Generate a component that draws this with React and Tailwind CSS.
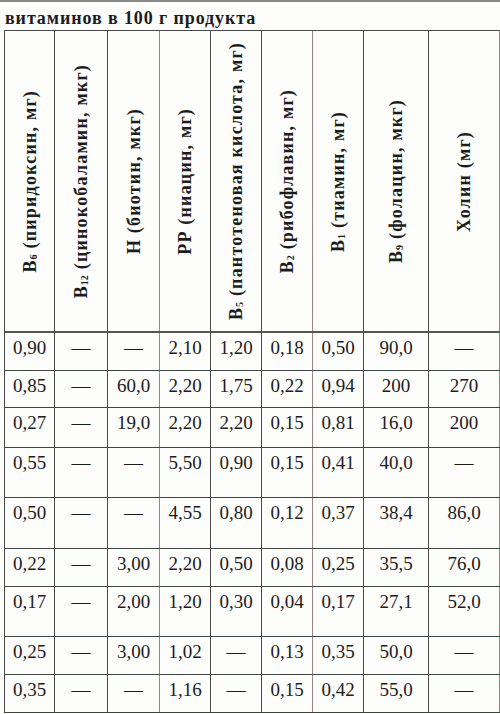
const columns = [
  { w: "w-[50px]", tint: false, label: ["B", "6", "(пиридоксин, мг)"] },
  { w: "w-[53px]", tint: false, label: ["B", "12", "(цинокобаламин, мкг)"] },
  { w: "w-[52px]", tint: true, label: ["H", null, "(биотин, мкг)"] },
  { w: "w-[51px]", tint: false, label: ["PP", null, "(ниацин, мг)"] },
  { w: "w-[51px]", tint: false, label: ["B", "5", "(пантотеновая кислота, мг)"] },
  { w: "w-[51px]", tint: true, label: ["B", "2", "(рибофлавин, мг)"] },
  { w: "w-[51px]", tint: false, label: ["B", "1", "(тиамин, мг)"] },
  { w: "w-[65px]", tint: false, label: ["B", "9", "(фолацин, мкг)"] },
  { w: "w-[71px]", tint: true, label: ["Холин", null, "(мг)"] },
];

const rows = [
  { h: "h-[38px]", cells: ["0,90", "—", "—", "2,10", "1,20", "0,18", "0,50", "90,0", "—"] },
  { h: "h-[37px]", cells: ["0,85", "—", "60,0", "2,20", "1,75", "0,22", "0,94", "200", "270"] },
  { h: "h-[40px]", cells: ["0,27", "—", "19,0", "2,20", "2,20", "0,15", "0,81", "16,0", "200"] },
  { h: "h-[50px]", cells: ["0,55", "—", "—", "5,50", "0,90", "0,15", "0,41", "40,0", "—"] },
  { h: "h-[51px]", cells: ["0,50", "—", "—", "4,55", "0,80", "0,12", "0,37", "38,4", "86,0"] },
  { h: "h-[38px]", cells: ["0,22", "—", "3,00", "2,20", "0,50", "0,08", "0,25", "35,5", "76,0"] },
  { h: "h-[50px]", cells: ["0,17", "—", "2,00", "1,20", "0,30", "0,04", "0,17", "27,1", "52,0"] },
  { h: "h-[38px]", cells: ["0,25", "—", "3,00", "1,02", "—", "0,13", "0,35", "50,0", "—"] },
  { h: "h-[38px]", cells: ["0,35", "—", "—", "1,16", "—", "0,15", "0,42", "55,0", "—"] },
];

function HeaderLabel({ label }) {
  const [main, sub, rest] = label;
  return (
    <div className="[writing-mode:vertical-rl] rotate-180 whitespace-nowrap font-bold text-[18px] leading-none tracking-[1.2px]">
      <span>{main}</span>
      {sub ? (
        <span className="relative left-[-4px] text-[10px] font-bold tracking-normal">{sub}</span>
      ) : null}
      <span> {rest}</span>
    </div>
  );
}

export default function App() {
  return (
    <div
      className="w-[500px] h-[714px] overflow-hidden bg-[#fdfdfc] text-[#1c1c1c]"
      style={{ fontFamily: '"Liberation Serif", "DejaVu Serif", serif' }}
    >
      <div className="h-[30px] border-t-2 border-[#8a8a8a] pl-[5px] pt-[6px] text-[18px] font-bold leading-[20px] tracking-[0.9px]">
        витаминов в 100 г продукта
      </div>

      <div className="ml-[4px] border-l border-t border-[#4a4a4a]">
        <div className="flex h-[302px] border-b-2 border-[#555]">
          {columns.map((c, i) => (
            <div
              key={i}
              className={`${c.w} shrink-0 flex items-center justify-center border-r ${
                c.tint ? "border-[#9b7e86]" : "border-[#4a4a4a]"
              }`}
            >
              <HeaderLabel label={c.label} />
            </div>
          ))}
        </div>

        {rows.map((r, ri) => (
          <div key={ri} className={`flex ${r.h} border-b border-[#3d4640]`}>
            {r.cells.map((v, ci) => (
              <div
                key={ci}
                className={`${columns[ci].w} shrink-0 border-r pt-[4px] text-center text-[19px] leading-[22px] ${
                  columns[ci].tint ? "border-[#9b7e86]" : "border-[#4a4a4a]"
                }`}
              >
                {v}
              </div>
            ))}
          </div>
        ))}
      </div>
    </div>
  );
}
